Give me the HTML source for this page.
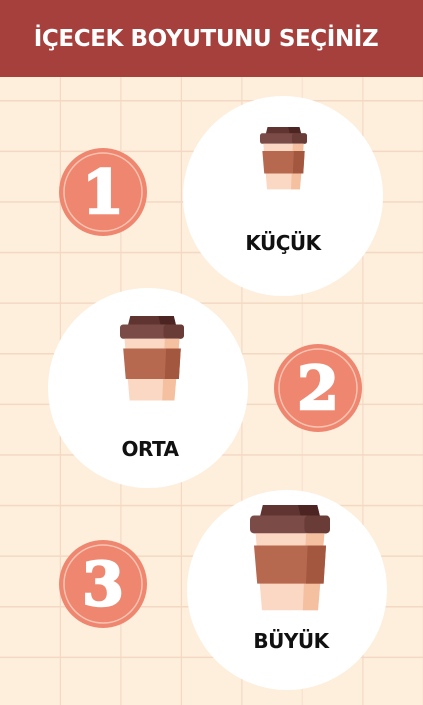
<!DOCTYPE html>
<html><head><meta charset="utf-8"><style>
html,body{margin:0;padding:0;width:423px;height:705px;overflow:hidden;background:#feeedc;}
</style></head><body>
<svg width="423" height="705" xmlns="http://www.w3.org/2000/svg" style="position:absolute;left:0;top:0">
<defs>
<pattern id="g" x="0" y="100" width="60.5" height="50.6" patternUnits="userSpaceOnUse">
<rect x="0" y="0" width="60.5" height="50.6" fill="#feeedc"/>
<rect x="59.8" y="0" width="1.5" height="50.6" fill="#f3d9c4"/>
<rect x="0" y="0" width="60.5" height="1.5" fill="#f3d9c4"/>
</pattern>
<g id="cup">
<path d="M16 0 H84 L88 16 H12 Z" fill="#5f3431"/>
<path d="M60 0 H84 L88 16 H64 Z" fill="#4c2421"/>
<rect x="0" y="13" width="100" height="22" rx="5" fill="#7b4b47"/>
<rect x="68" y="13" width="32" height="22" rx="5" fill="#6a3c38"/>
<path d="M7 35 H93 L85 130 H15 Z" fill="#fad8c3"/>
<path d="M70 35 H93 L85 130 H66 Z" fill="#f4c0a0"/>
<path d="M5 50 H95 L92 97 H9 Z" fill="#b6694f"/>
<path d="M72 50 H95 L92 97 H70 Z" fill="#a3573e"/>
</g>
</defs>
<rect x="0" y="77" width="423" height="628" fill="url(#g)"/>
<rect x="0" y="0" width="423" height="77" fill="#a6403d"/>
<text x="206" y="46" text-anchor="middle" font-family="DejaVu Sans" font-weight="bold" font-size="23" fill="#fff" letter-spacing="-0.4">İÇECEK BOYUTUNU SEÇİNİZ</text>

<circle cx="283" cy="196" r="100" fill="#fff"/>
<circle cx="148" cy="388" r="100" fill="#fff"/>
<circle cx="287" cy="590" r="100" fill="#fff"/>

<use href="#cup" transform="translate(260,127) scale(0.47,0.48)"/>
<use href="#cup" transform="translate(120,316) scale(0.64,0.65)"/>
<use href="#cup" transform="translate(250,505) scale(0.8,0.81)"/>

<g font-family="DejaVu Sans" font-weight="bold" font-size="20" fill="#111" text-anchor="middle" letter-spacing="-0.5">
<text x="283" y="250">KÜÇÜK</text>
<text x="150" y="456">ORTA</text>
<text x="291" y="648">BÜYÜK</text>
</g>

<g font-family="DejaVu Serif" font-weight="bold" font-size="60" fill="#fff" text-anchor="middle" stroke="#fff" stroke-width="2.5">
<circle cx="103" cy="192" r="44" fill="#ee8670" stroke="none"/>
<circle cx="103" cy="192" r="39" fill="none" stroke="#f9c4b2" stroke-width="1.5"/>
<text x="103" y="213">1</text>
<circle cx="318" cy="388" r="44" fill="#ee8670" stroke="none"/>
<circle cx="318" cy="388" r="39" fill="none" stroke="#f9c4b2" stroke-width="1.5"/>
<text x="318" y="409">2</text>
<circle cx="103" cy="584" r="44" fill="#ee8670" stroke="none"/>
<circle cx="103" cy="584" r="39" fill="none" stroke="#f9c4b2" stroke-width="1.5"/>
<text x="103" y="605">3</text>
</g>
</svg>
</body></html>
